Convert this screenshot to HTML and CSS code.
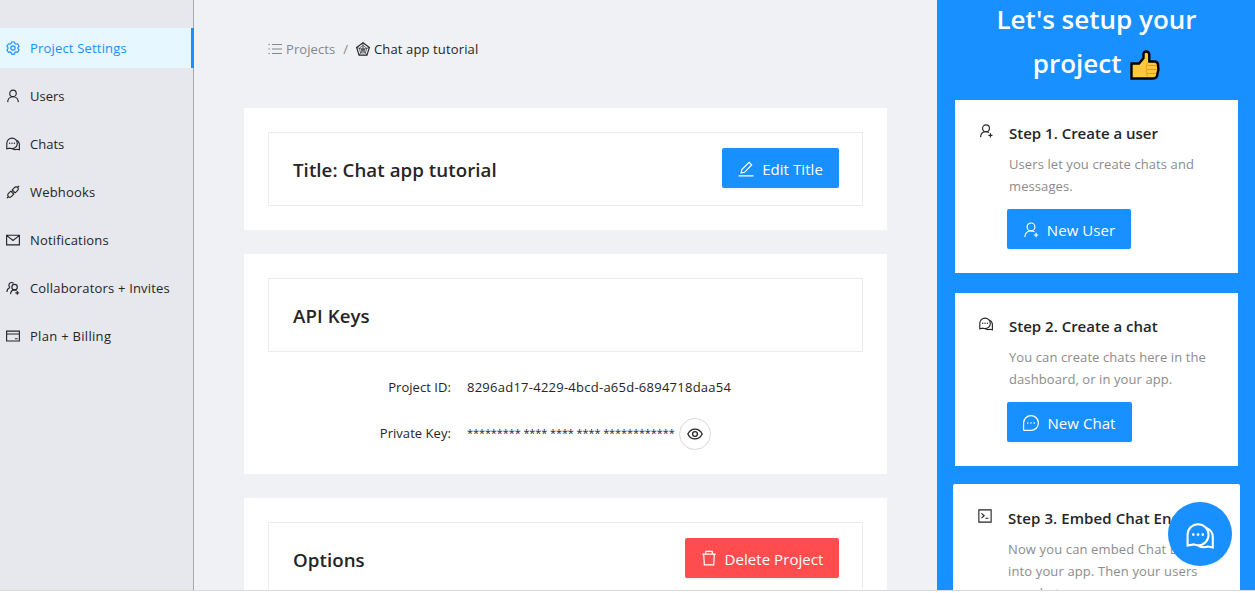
FILE: index.html
```html
<!DOCTYPE html>
<html lang="en">
<head>
<meta charset="utf-8">
<title>Project Settings</title>
<link rel="stylesheet" href="styles.css">
</head>
<body>
<svg class="sprite" aria-hidden="true">
  <symbol id="gear" viewBox="0 0 16 16"><path d="M6.3 1.1h3.4l.5 1.9 1.2.7 1.9-.5L15 6.100 13.700 7.500v1.100L15 10l-1.700 2.900-1.900-.5-1.200.7-.5 1.900H6.300l-.5-1.900-1.200-.7-1.900.5L1 10l1.300-1.400V7.500L1 6.100l1.700-2.900 1.900.5L5.800 3z"/><circle cx="8" cy="8" r="2.500"/></symbol>
  <symbol id="user" viewBox="0 0 16 16"><circle cx="8" cy="5" r="3.700"/><path d="M1.900 15c.1-3.700 2.700-6.200 6.100-6.200s6 2.500 6.100 6.200"/></symbol>
  <symbol id="chats" viewBox="0 0 16 16"><path d="M.9 13.400V7.300a6 6 0 1 1 6 6c-.9 0-1.700-.2-2.400-.5z"/><path d="M11.900 3.600A5.600 5.600 0 0 1 15.300 9v5.600l-2.700-.6a6.400 6.400 0 0 1-5.800-.7"/><path class="dots" d="M4.200 7.200h.01M6.900 7.200h.01M9.600 7.200h.01"/></symbol>
  <symbol id="hook" viewBox="0 0 16 16"><path d="M7.200 5.500 9.600 3c1.200-1.200 2.700-1.200 3.700-.2s1 2.500-.2 3.700l-2.500 2.400zM8.800 10.500 6.400 13c-1.200 1.200-2.700 1.200-3.700.2s-1-2.500.2-3.700l2.500-2.400zM13.200 2.800 15 1M1 15l1.800-1.800M6.200 7.900l1.300-1.300M8.100 9.800l1.300-1.300"/></symbol>
  <symbol id="mail" viewBox="0 0 16 16"><path d="M.7 2.600h14.600v10.900H.7zM1 3l7 5.500L15 3"/></symbol>
  <symbol id="team" viewBox="0 0 16 16"><path d="M4.600 7.400A3.100 3.100 0 1 1 8.700 2.800M1 12.500c.1-2.500 1.300-4.300 3.600-5.100M5.200 15c.2-2.700 1.800-4.800 4.500-4.800 1 0 1.800.3 2.400.7M10.700 13.500H15M12.900 11.400v4.300"/><circle cx="9.800" cy="7" r="3.100"/></symbol>
  <symbol id="card" viewBox="0 0 16 16"><path d="M.7 2.400h14.600v11.300H.7zM.7 5.700h14.600M10.200 11.100h3.100"/></symbol>
  <symbol id="list" viewBox="0 0 16 16"><path d="M4.500 2.800H16M4.500 8H16M4.500 13.200H16"/><path class="dots" d="M1.300 2.800h.01M1.300 8h.01M1.300 13.200h.01"/></symbol>
  <symbol id="radar" viewBox="0 0 16 16"><path d="M8 .8 15.300 6.300 12.500 15h-9L.7 6.300z"/><path class="fine" d="M8 3.900l4.300 3.300-1.600 5.200H5.300L3.700 7.200zM8 6.600l2 1.500-.8 2.300H6.800L6 8.100zM8 .8v7.700L3.500 15M.7 6.300 8 8.500l7.300-2.200M8 8.500l4.500 6.500"/></symbol>
  <symbol id="edit" viewBox="0 0 16 16"><path d="M.5 14.800h15M3.200 11.900l.6-3.300 7.300-7.200 2.600 2.600-7.200 7.300z"/></symbol>
  <symbol id="eye" viewBox="0 0 16 16"><path d="M.8 8C2.400 4.800 4.800 3.100 8 3.100S13.600 4.800 15.200 8c-1.600 3.200-4 4.900-7.200 4.900S2.400 11.200.8 8z"/><circle cx="8" cy="8" r="2.400"/></symbol>
  <symbol id="trash" viewBox="0 0 16 16"><path d="M1.200 4.100h13.600M4.700 4V1.300h6.600V4M2.700 4.100l.6 10.700h9.400l.6-10.700"/></symbol>
  <symbol id="adduser" viewBox="0 0 16 16"><circle cx="8" cy="4.900" r="3.900"/><path d="M1.800 15c.1-3.600 2.500-6.200 6.200-6.200 1.400 0 2.600.4 3.500 1.100M10.800 13h4.600M13.100 10.700v4.600"/></symbol>
  <symbol id="message" viewBox="0 0 16 16"><path d="M.6 14.800V8A7.400 7.400 0 1 1 8 15.400H1.200q-.6 0-.6-.6z"/><path class="dots" d="M4.700 8h.01M8 8h.01M11.300 8h.01"/></symbol>
  <symbol id="code" viewBox="0 0 16 16"><path d="M1 1h14v14H1zM4 5l3 2.700-3 2.700M8.400 10.600h3.600"/></symbol>
</svg>
<div class="app">
  <nav class="sidebar">
    <a class="nav-item active"><svg class="icon"><use href="#gear"/></svg><span>Project Settings</span></a>
    <a class="nav-item"><svg class="icon"><use href="#user"/></svg><span class="plain">Users</span></a>
    <a class="nav-item"><svg class="icon"><use href="#chats"/></svg><span class="plain">Chats</span></a>
    <a class="nav-item"><svg class="icon"><use href="#hook"/></svg><span>Webhooks</span></a>
    <a class="nav-item"><svg class="icon"><use href="#mail"/></svg><span>Notifications</span></a>
    <a class="nav-item"><svg class="icon"><use href="#team"/></svg><span>Collaborators + Invites</span></a>
    <a class="nav-item"><svg class="icon"><use href="#card"/></svg><span class="wide">Plan + Billing</span></a>
  </nav>
  <main class="content">
    <div class="breadcrumb">
      <svg class="icon"><use href="#list"/></svg><span class="crumb">Projects</span><span class="slash">/</span><svg class="icon current"><use href="#radar"/></svg><span class="current here">Chat app tutorial</span>
    </div>
    <section class="card">
      <div class="panel"><h2>Title: Chat app tutorial</h2><button class="btn edit"><svg class="icon"><use href="#edit"/></svg><span>Edit Title</span></button></div>
    </section>
    <section class="card keys">
      <div class="panel"><h2>API Keys</h2></div>
      <dl class="fields">
        <dt>Project ID:</dt><dd class="uuid">8296ad17-4229-4bcd-a65d-6894718daa54</dd>
        <dt>Private Key:</dt><dd><span class="secret">********* **** **** **** ************</span><button class="round"><svg class="icon"><use href="#eye"/></svg></button></dd>
      </dl>
    </section>
    <section class="card">
      <div class="panel"><h2>Options</h2><button class="btn danger"><svg class="icon"><use href="#trash"/></svg><span>Delete Project</span></button></div>
    </section>
  </main>
  <aside class="setup">
    <h1>Let's setup your<br>project <svg class="thumb" viewBox="0 0 30 30"><path d="M1.500 13.500H9L13.500 8V3.500Q14 1.500 16.300 1.500T19.300 4V11.500H25Q28.500 12 28 16Q29 20 27.500 23Q27.500 28.500 23 28.500H1.500Z" fill="#ffc83d" stroke="#000" stroke-width="2.400"/><path d="M18 15.500h9M17 19.500h10M17 23.500h9M18 12.500q-2 1-1 3-2 2 0 4-1.500 2 0 4-1 2 1 3" fill="none" stroke="#e39a1b" stroke-width="1"/></svg></h1>
    <article class="step">
      <svg class="icon"><use href="#adduser"/></svg>
      <div class="step-body"><h3>Step 1. Create a user</h3><p>Users let you create chats and<br>messages.</p><button class="btn new"><svg class="icon"><use href="#adduser"/></svg><span>New User</span></button></div>
    </article>
    <article class="step">
      <svg class="icon"><use href="#chats"/></svg>
      <div class="step-body"><h3>Step 2. Create a chat</h3><p>You can create chats here in the<br>dashboard, or in your app.</p><button class="btn new chat"><svg class="icon"><use href="#message"/></svg><span>New Chat</span></button></div>
    </article>
    <article class="step current-step">
      <svg class="icon"><use href="#code"/></svg>
      <div class="step-body"><h3>Step 3. Embed Chat Engine</h3><p>Now you can embed Chat Engine<br>into your app. Then your users<br>can chat.</p></div>
    </article>
  </aside>
  <button class="fab"><svg class="icon"><use href="#chats"/></svg></button>
</div>
</body>
</html>
```
FILE: styles.css
```css
* { box-sizing: border-box; }
body { margin: 0; background: #fff; overflow: hidden; color: #252526; font: 13px/22px "Open Sans", "Noto Sans", sans-serif; }
h1, h2, h3, p, dl, dd { margin: 0; }
button { font: inherit; border: 0; padding: 0; }
.sprite { position: absolute; width: 0; height: 0; }
.icon { width: 14px; height: 14px; flex: none; fill: none; stroke: currentColor; stroke-width: 1.3; overflow: visible; }
.dots { stroke-width: 1.6; stroke-linecap: round; }
.fine { stroke-width: .75; }
.app { position: relative; display: flex; height: 591px; overflow: hidden; background: #f0f1f5; border-bottom: 1px solid #d9dae0; }

.sidebar { width: 194px; flex: none; padding-top: 28px; background: #e7e8ed; border-right: 1px solid #a8a9ad; display: flex; flex-direction: column; gap: 8px; }
.nav-item { display: flex; align-items: center; gap: 10px; height: 40px; padding-left: 6px; white-space: nowrap; letter-spacing: .18px; }
.nav-item.active { color: #1890ff; background: #e6f7ff; border-right: 3px solid #1890ff; margin-right: -1px; }
.plain { letter-spacing: 0; }
.wide { letter-spacing: .3px; }

.content { width: 743px; flex: none; padding: 38px 50px 0; display: flex; flex-direction: column; gap: 24px; }
.breadcrumb { display: flex; align-items: center; height: 22px; margin-bottom: 24px; padding-left: 24px; color: #85868a; }
.crumb { margin-left: 4px; letter-spacing: .07px; }
.slash { margin: 0 8px; }
.current { color: #252526; }
.here { margin-left: 4px; letter-spacing: .14px; }
.card { flex: none; height: 122px; padding: 24px; background: #fff; }
.card.keys { height: 220px; }
.panel { height: 74px; display: flex; align-items: center; justify-content: space-between; padding: 0 23px 3px 24px; border: 1px solid #ebebee; }
h2 { padding-top: 5px; font-size: 18.700px; line-height: 28px; font-weight: 600; letter-spacing: .06px; }
.btn { display: flex; align-items: center; justify-content: center; gap: 8px; height: 40px; border-radius: 2px; color: #fff; background: #1890ff; font-size: 15px; box-shadow: 0 2px 0 rgba(0,0,0,.04); white-space: nowrap; }
.btn .icon { width: 16px; height: 16px; margin-top: 2px; stroke-width: 1.200; }
.btn span { padding-top: 2px; letter-spacing: .06px; }
.edit { width: 117px; }
.danger { width: 154px; background: #ff4d4f; }
.danger .icon { margin-top: 0; }
.fields { display: grid; grid-template-columns: 183px 1fr; column-gap: 16px; grid-template-rows: 46px 46px; align-items: center; padding-top: 12px; }
dt { text-align: right; letter-spacing: .05px; }
dd { display: flex; align-items: center; }
.uuid { letter-spacing: .25px; }
.secret { font-size: 11px; letter-spacing: -.1px; }
.round { width: 32px; height: 32px; margin: 2px 0 0 4px; display: grid; place-items: center; border: 1px solid #d9d9d9; border-radius: 50%; background: #fff; color: #252526; }
.round .icon { width: 16px; height: 16px; }

.setup { width: 318px; flex: none; padding: 0 17px 0 18px; background: #1890ff; }
h1 { height: 100px; margin-top: -3px; margin-bottom: 3px; color: #fff; font-size: 26px; font-weight: 600; line-height: 44px; text-align: center; white-space: nowrap; }
.thumb { width: 30px; height: 30px; margin-left: 2px; vertical-align: -7px; }
.step { display: flex; gap: 16px; height: 173px; margin-bottom: 20px; padding: 21px 0 0 24px; background: #fff; }
.step > .icon { margin-top: 3px; }
h3 { font-size: 15px; line-height: 24px; font-weight: 600; white-space: nowrap; }
p { margin-top: 8px; color: #8c8c8c; letter-spacing: .09px; white-space: nowrap; }
.new { width: 124px; margin: 12px 0 0 -2px; }
.new.chat { width: 125px; }
.current-step { height: 180px; margin: -2px -2px 0; padding: 22px 0 0 25px; border-radius: 2px; }
.current-step h3 { letter-spacing: .08px; }
.current-step p { letter-spacing: .13px; }
.fab { position: absolute; left: 1168px; top: 502px; width: 64px; height: 64px; display: grid; place-items: center; border-radius: 50%; background: #1890ff; color: #fff; box-shadow: 0 2px 0 rgba(0,0,0,.04); }
.fab .icon { width: 28px; height: 28px; stroke-width: 1.200; margin-top: 4px; }
```
